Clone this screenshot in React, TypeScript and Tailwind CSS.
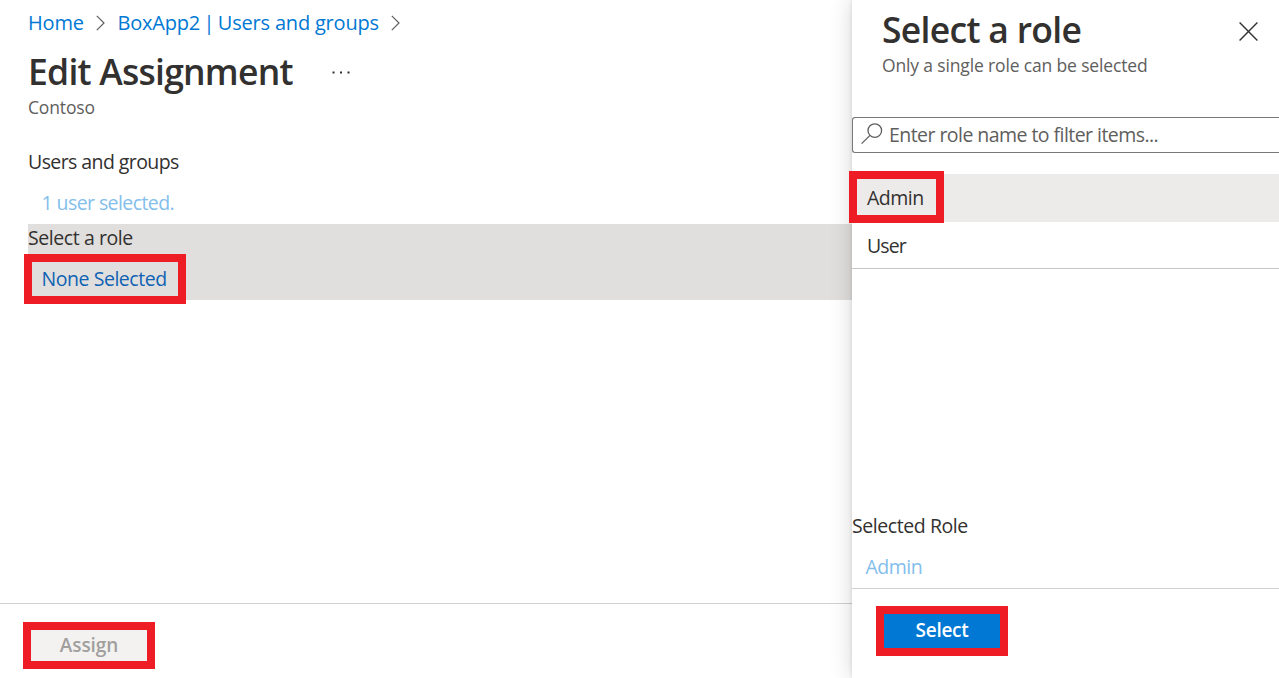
import type { ReactNode } from "react";

function Chevron({ className }: { className: string }) {
  return (
    <svg className={className} width="9" height="16" viewBox="0 0 9 16" fill="none" stroke="#605e5c" strokeWidth="1.2">
      <path d="M0.8 0.8 8 8 0.8 15.2" />
    </svg>
  );
}

function SearchIcon() {
  return (
    <svg className="mb-[2px] ml-2 shrink-0" width="22" height="22" viewBox="0 0 22 22" fill="none" stroke="#605e5c" strokeWidth="1.3">
      <circle cx="13.8" cy="7.6" r="6.8" />
      <path d="M9 12.4 0.6 20.6" />
    </svg>
  );
}

function Field({ label, children, className = "" }: { label: ReactNode; children: ReactNode; className?: string }) {
  return (
    <div className={`flex h-[76px] flex-col ${className}`}>
      <div className="flex">{label}</div>
      <div className="mt-[13px] flex pl-[13.5px]">{children}</div>
    </div>
  );
}

function Highlight({ className }: { className: string }) {
  return <div className={`pointer-events-none absolute z-20 border-[#ee1c25] ${className}`} />;
}

export default function App() {
  return (
    <div className="relative flex h-[678px] w-[1279px] overflow-hidden bg-white font-['Open_Sans','Noto_Sans',sans-serif] text-[19.5px] leading-[28px] whitespace-nowrap text-[#323130]">
      <main className="flex w-[852px] flex-col">
        <nav className="mt-[9px] flex h-[28px] items-center pl-[28px] text-[20px] text-[#0078d4]">
          <a className="w-[56px] tracking-[-0.15px]">Home</a>
          <Chevron className="-mt-px ml-[12px]" />
          <a className="ml-[12.5px] w-[261.5px] tracking-[-0.2px]">
            BoxApp2<span className="[word-spacing:-1.5px]"> | </span>Users and groups
          </a>
          <Chevron className="-mt-px ml-[12px]" />
        </nav>
        <header className="mt-[10px] pl-[28px]">
          <div className="flex h-[48px]">
            <h1 className="w-[304px] text-[35.5px] leading-[48px] font-semibold tracking-[-0.76px]">Edit Assignment</h1>
            <svg className="mt-[24px]" width="18" height="3" viewBox="0 0 18 3" fill="#323130">
              <rect x="0.5" y="0.5" width="2" height="2" />
              <rect x="8" y="0.5" width="2" height="2" />
              <rect x="15.5" y="0.5" width="2" height="2" />
            </svg>
          </div>
          <p className="text-[17.5px] leading-[24px] tracking-[-0.15px] text-[#605e5c]">Contoso</p>
        </header>
        <section className="mt-[29px] flex flex-col pl-[28px]">
          <Field label={<span className="tracking-[-0.58px]">Users and groups</span>}>
            <span className="tracking-[-0.58px] text-[#83beec]">1 user selected.</span>
          </Field>
          <Field className="bg-[#e1dfdd]" label={<span className="tracking-[-0.42px]">Select a role</span>}>
            <span className="tracking-[-0.45px] text-[#0f62b4]">None Selected</span>
          </Field>
        </section>
        <footer className="mt-auto flex h-[75px] border-t border-[#d2d0ce] pt-[25px] pl-[30px]">
          <button className="flex h-[33px] w-[118px] items-center justify-center bg-[#f3f2f1] pb-[2px] text-[19px] font-semibold tracking-[-0.1px] text-[#a19f9d]">
            Assign
          </button>
        </footer>
      </main>

      <aside className="z-10 flex w-[427px] flex-col bg-white shadow-[0_0_22px_rgba(0,0,0,0.16),0_0_4px_rgba(0,0,0,0.12)]">
        <header className="flex h-[117px] justify-between pt-[5px] pr-[21.5px] pl-[30px]">
          <div>
            <h2 className="text-[35.5px] leading-[48px] font-semibold tracking-[-0.7px]">Select a role</h2>
            <p className="text-[17.5px] leading-[24px] tracking-[-0.15px] text-[#605e5c]">Only a single role can be selected</p>
          </div>
          <svg className="mt-[16.5px]" width="19" height="19" viewBox="0 0 19 19" stroke="#323130" strokeWidth="1.4">
            <path d="M0.6 0.6 18.4 18.4M18.4 0.6 0.6 18.4" />
          </svg>
        </header>
        <div className="flex h-[36px] items-center rounded-l-[3px] border border-r-0 border-[#7a7876]">
          <SearchIcon />
          <span className="ml-[6px] tracking-[-0.55px] text-[#605e5c]">Enter role name to filter items...</span>
        </div>
        <div className="mt-[21px] flex h-[48px] items-center bg-[#edebe9] pl-[15px] tracking-[-0.5px]">Admin</div>
        <div className="flex h-[47px] items-start border-b border-[#c8c6c4] pt-[10px] pl-[15px] tracking-[-0.9px]">User</div>
        <div className="mt-auto flex h-[77px] flex-col border-b border-[#d2d0ce]">
          <div className="tracking-[-0.43px]">Selected Role</div>
          <div className="mt-[13px] pl-[13.5px] tracking-[-0.5px] text-[#83beec]">Admin</div>
        </div>
        <footer className="flex h-[89px] pt-[25px] pl-[31px]">
          <button className="flex h-[34px] w-[118px] items-center justify-center bg-[#0078d4] pb-[2px] text-[19px] font-semibold tracking-[-0.3px] text-white">
            Select
          </button>
        </footer>
      </aside>

      <Highlight className="top-[254px] left-[24px] h-[50px] w-[162px] border-8" />
      <Highlight className="top-[171px] left-[849px] h-[52px] w-[95px] border-8" />
      <Highlight className="top-[622px] left-[23px] h-[47px] w-[132px] border-8" />
      <Highlight className="top-[606px] left-[876px] h-[50px] w-[132px] border-8" />
    </div>
  );
}
